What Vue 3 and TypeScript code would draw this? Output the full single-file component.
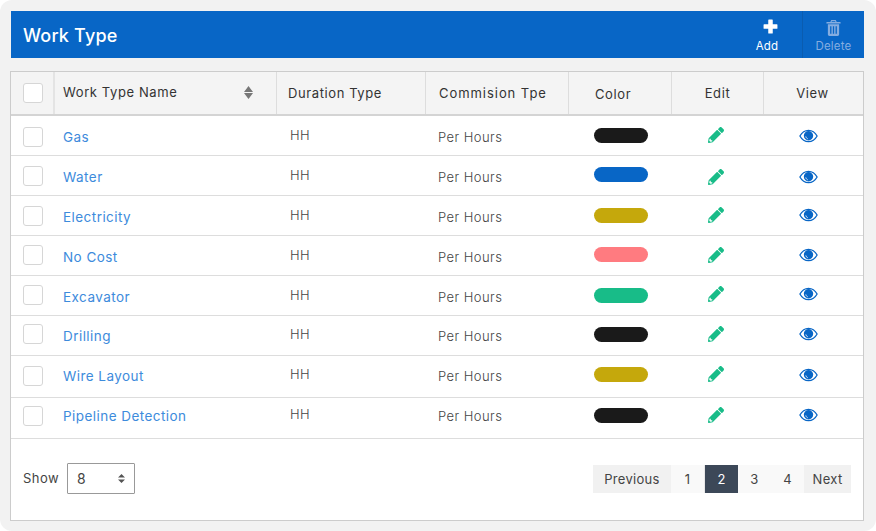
<script setup lang="ts">
interface Row { name: string; color: string }
const rows: Row[] = [
  { name: 'Gas', color: '#1a1a1a' },
  { name: 'Water', color: '#0866c6' },
  { name: 'Electricity', color: '#c5a80c' },
  { name: 'No Cost', color: '#ff7b80' },
  { name: 'Excavator', color: '#18bc88' },
  { name: 'Drilling', color: '#1a1a1a' },
  { name: 'Wire Layout', color: '#c5a80c' },
  { name: 'Pipeline Detection', color: '#1a1a1a' },
]
const pages = ['1', '2', '3', '4']
</script>

<template>
  <div class="panel">
    <header class="bar">
      <h1>Work Type</h1>
      <div class="actions">
        <button class="action add">
          <svg width="15" height="15" viewBox="0 0 16 16"><path d="M6.200 .6h3.600a.6.6 0 0 1 .6.6v4.400h4.400a.6.6 0 0 1 .6.6v3.600a.6.6 0 0 1-.6.6h-4.400v4.400a.6.6 0 0 1-.6.6H6.200a.6.6 0 0 1-.6-.6v-4.400H1.200a.6.6 0 0 1-.6-.6V6.200a.6.6 0 0 1 .6-.6h4.400V1.200a.6.6 0 0 1 .6-.6z" fill="#fff"/></svg>
          <span>Add</span>
        </button>
        <button class="action del">
          <svg width="15" height="16" viewBox="0 0 16 17"><path fill-rule="evenodd" d="M5.600 0h4.800l1 2.200H15a.6.6 0 0 1 .6.6v1H.4v-1a.6.6 0 0 1 .6-.6h3.600zM2 4.600h12v10.600c0 1-.7 1.800-1.600 1.800H3.600c-.9 0-1.600-.8-1.600-1.800zM4.400 6.600v8h1.400v-8zm2.900 0v8h1.400v-8zm2.900 0v8h1.400v-8zM6.300 1.200l-.4 1h4.200l-.4-1z" fill="#85ade0"/></svg>
          <span>Delete</span>
        </button>
      </div>
    </header>

    <section class="card">
      <div class="row head">
        <div class="cell check"><span class="box"></span></div>
        <div class="cell name">Work Type Name
          <svg class="sort" width="9" height="13" viewBox="0 0 9 13"><path d="M4.500 0 9 5.900H0zM0 7.100h9L4.500 13z" fill="#777"/></svg>
        </div>
        <div class="cell dur">Duration Type</div>
        <div class="cell com">Commision Tpe</div>
        <div class="cell col">Color</div>
        <div class="cell ed">Edit</div>
        <div class="cell vw">View</div>
      </div>
      <div v-for="r in rows" :key="r.name" class="row body">
        <div class="cell check"><span class="box"></span></div>
        <div class="cell name"><a>{{ r.name }}</a></div>
        <div class="cell dur hh">HH</div>
        <div class="cell com per">Per Hours</div>
        <div class="cell col"><span class="pill" :style="{ background: r.color }"></span></div>
        <div class="cell ed">
          <svg width="16" height="16" viewBox="0 0 512 512"><path d="M497.900 142.100l-46.100 46.100c-4.700 4.700-12.300 4.700-17 0l-111-111c-4.700-4.700-4.700-12.300 0-17l46.100-46.100c18.700-18.700 49.100-18.700 67.900 0l60.100 60.100c18.800 18.700 18.800 49.100 0 67.900zM284.200 99.800L21.600 362.400.4 483.900c-2.900 16.400 11.400 30.600 27.800 27.800l121.500-21.300 262.600-262.600c4.700-4.700 4.700-12.300 0-17l-111-111c-4.800-4.700-12.400-4.700-17.100 0zM88 424h48v36.300l-64.500 11.300-31.100-31.100L51.700 376H88v48z" fill="#18bc88"/></svg>
        </div>
        <div class="cell vw">
          <svg width="19" height="14" viewBox="0 0 19 14"><path d="M.9 7C2.900 3.400 6 1.300 9.500 1.300S16.100 3.400 18.100 7c-2 3.600-5.100 5.700-8.600 5.700S2.900 10.600.9 7z" fill="none" stroke="#0866c6" stroke-width="1.300"/><circle cx="9.500" cy="6.700" r="4.700" fill="#0866c6"/><path d="M6.800 7.400c.2 1.300 1 2.100 2 2.400" fill="none" stroke="#cfe0f5" stroke-width="1"/></svg>
        </div>
      </div>

      <footer class="foot">
        <div class="show">
          <span>Show</span>
          <div class="select">
            <span>8</span>
            <svg width="7" height="9" viewBox="0 0 7 9"><path d="M3.500 0 7 3.500H0zM0 5.500h7L3.500 9z" fill="#555"/></svg>
          </div>
        </div>
        <nav class="pager">
          <a class="nav prev">Previous</a>
          <a v-for="p in pages" :key="p" class="pg" :class="{ on: p === '2' }">{{ p }}</a>
          <a class="nav next">Next</a>
        </nav>
      </footer>
    </section>
  </div>
</template>

<style>
html, body { margin: 0; background: #fff; }
</style>

<style scoped>
.panel {
  width: 876px;
  height: 531px;
  box-sizing: border-box;
  background: #f2f2f2;
  border-radius: 12px;
  padding: 11px 12px 10px 10px;
  display: flex;
  flex-direction: column;
  font-family: Inter, "Open Sans", sans-serif;
  color: #444;
  font-size: 13px;
  font-weight: 300;
}
.bar {
  margin-left: 1px;
  height: 47px;
  flex: none;
  background: #0866c6;
  display: flex;
  justify-content: space-between;
  align-items: stretch;
  color: #fff;
}
.bar h1 {
  margin: 0;
  padding: 2px 0 0 12px;
  align-self: center;
  font-size: 18px;
  font-weight: 500;
  letter-spacing: .2px;
}
.actions { display: flex; }
.action {
  border: 0;
  background: none;
  font: inherit;
  font-size: 11.500px;
  letter-spacing: .2px;
  display: flex;
  flex-direction: column;
  align-items: center;
  justify-content: flex-end;
  gap: 3px;
  padding: 6px 0 5px;
}
.add { width: 70px; color: #fff; font-weight: 400; }
.add svg { margin-left: 6px; margin-bottom: 2px; }
.del { width: 62px; color: #85ade0; border-left: 1px solid #0a5cb0; font-weight: 400; }
.card {
  margin-top: 13px;
  flex: 1;
  background: #fff;
  border: 1px solid #ccc;
  display: flex;
  flex-direction: column;
  min-height: 0;
}
.row {
  display: grid;
  grid-template-columns: 44px 222px 149px 143px 103px 92px 99px;
  flex: none;
  box-sizing: border-box;
}
.head {
  height: 44px;
  background: #f4f4f4;
  border-bottom: 2px solid #d4d4d4;
  color: #333;
  font-weight: 400;
  letter-spacing: .6px;
}
.head .cell { border-right: 1px solid #ddd; }
.head .cell:last-child { border-right: 0; }
.head .check { border-right: 2px solid #e4e4e4; }
.head .com { letter-spacing: .95px; }
.body {
  height: 40px;
  padding-top: 2px;
  border-bottom: 1px solid #ddd;
  letter-spacing: .45px;
}
.body:nth-of-type(7) { padding-top: 0; }
.body:nth-of-type(8) { height: 42px; padding: 0 0 2px; }
.body:nth-of-type(9) { height: 41px; padding: 0 0 4px; }
.cell { display: flex; align-items: center; min-width: 0; box-sizing: border-box; }
.check { padding-left: 12px; }
.body:nth-of-type(3) .check, .body:nth-of-type(4) .check { padding-bottom: 1px; }
.body:nth-of-type(5) .check, .body:nth-of-type(6) .check, .body:nth-of-type(7) .check { padding-bottom: 3px; }
.box {
  width: 18px;
  height: 18px;
  background: #fff;
  border: 1px solid #d6d6d6;
  border-radius: 3px;
  display: block;
}
.name { padding-left: 8px; position: relative; }
.head .name { padding-bottom: 3px; }
.sort { position: absolute; right: 23px; top: 14px; }
.name a { color: #3d8bdc; font-size: 13.500px; font-weight: 400; }
.head .dur { padding-left: 11px; }
.head .com { padding-left: 13px; }
.head .col { padding-left: 26px; padding-top: 1px; }
.head .ed, .head .vw, .body .ed, .body .vw { justify-content: center; }
.head .vw { padding-right: 2px; }
.hh { padding: 0 0 4px 13px; }
.per { padding-left: 12px; }
.body .col { padding: 0 0 2px 25px; }
.body:nth-of-type(3) .col, .body:nth-of-type(5) .col { padding-bottom: 4px; }
.body:nth-of-type(9) .col { padding-bottom: 1px; }
.pill { width: 54px; height: 15px; border-radius: 8px; display: block; }
.body .ed { padding: 0 5px 3px 0; }
.body .vw { padding: 0 11px 2px 0; }
.body:nth-of-type(3) .ed, .body:nth-of-type(3) .vw { padding-bottom: 0; }
.body:nth-of-type(4) .ed, .body:nth-of-type(4) .vw,
.body:nth-of-type(5) .ed, .body:nth-of-type(5) .vw,
.body:nth-of-type(7) .ed, .body:nth-of-type(7) .vw { padding-bottom: 4px; }
.body:nth-of-type(6) .ed, .body:nth-of-type(6) .vw { padding-bottom: 6px; }
.foot {
  flex: 1;
  display: flex;
  justify-content: space-between;
  align-items: center;
  padding: 0 12px 1px 12px;
}
.show { display: flex; align-items: center; gap: 8px; letter-spacing: .45px; font-weight: 400; margin-bottom: 2px; }
.select {
  width: 68px;
  height: 31px;
  box-sizing: border-box;
  border: 1px solid #999;
  border-radius: 1px;
  display: flex;
  align-items: center;
  justify-content: space-between;
  padding: 0 9px 0 9px;
  font-size: 14px;
  font-weight: 400;
}
.pager { display: flex; align-items: center; letter-spacing: .3px; font-weight: 400; }
.pager a {
  height: 28px;
  display: flex;
  align-items: center;
  justify-content: center;
  box-sizing: border-box;
  color: #444;
}
.nav { background: #f1f1f1; }
.prev { width: 78px; }
.next { width: 47px; }
.pg { width: 33px; background: #f9f9f9; }
.pager .pg.on { background: #3c4858; color: #fff; border-left: 1px solid #e8e8e8; width: 34px; }
</style>
